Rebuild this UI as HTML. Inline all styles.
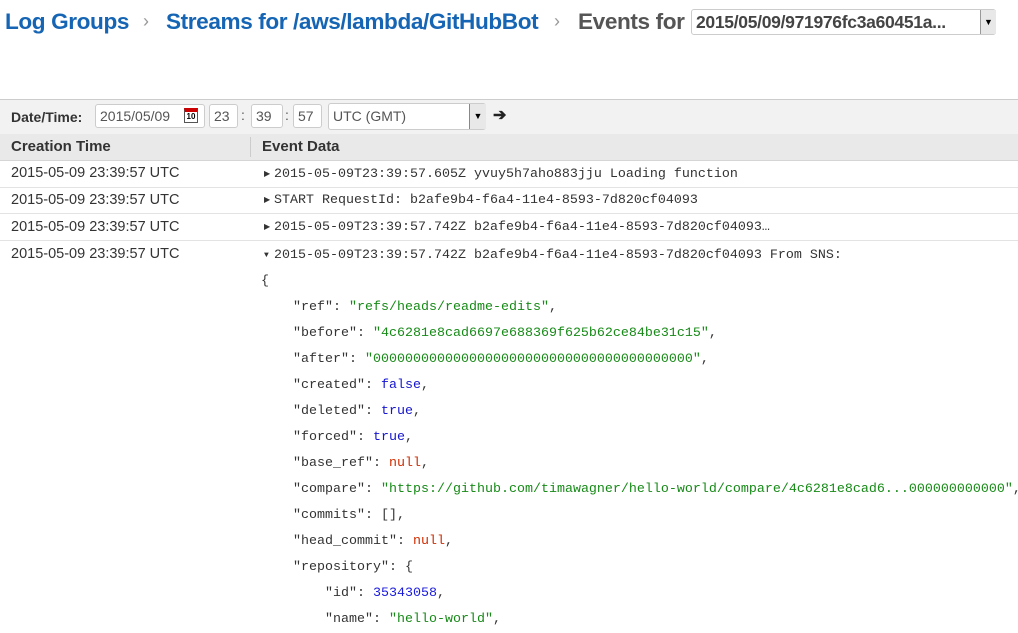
<!DOCTYPE html>
<html><head><style>
body{margin:0;width:1018px;height:628px;overflow:hidden;background:#fff;font-family:"Liberation Sans",Arial,sans-serif;position:relative}
.a{position:absolute;white-space:pre}
.h{font-size:22.6px;font-weight:bold;top:9px;letter-spacing:-0.4px}
.bl{color:#1565b4}
.g{color:#555}
.sep{color:#999;font-size:18px;top:11px;font-weight:normal}
.box{position:absolute;border:1px solid #ccc;border-radius:3px;background:#fff;font-size:14px;color:#555;box-sizing:border-box;padding-left:4px;line-height:22px}
.m{font-family:"Liberation Mono","Courier New",monospace;font-size:13.33px;color:#333}
.t{display:inline-block;width:10px;font-size:8px;vertical-align:1px}
.row{position:absolute;left:0;width:1018px;border-bottom:1px solid #e3e3e3}
.ct{position:absolute;left:11px;font-size:14.5px;color:#333}
.s{color:#178a17}.b{color:#1515d0}.n{color:#d02c00}.num{color:#1a1adb}
</style></head><body>
<div class="a h bl" style="left:5px">Log Groups</div>
<div class="a sep" style="left:143px">›</div>
<div class="a h bl" style="left:166px">Streams for /aws/lambda/GitHubBot</div>
<div class="a sep" style="left:554px">›</div>
<div class="a h g" style="left:578px">Events for</div>
<div class="box" style="left:691px;top:9px;width:305px;height:26px;font-size:17.5px;font-weight:bold;color:#444;line-height:24px;letter-spacing:-0.3px">2015/05/09/971976fc3a60451a...</div>
<div style="position:absolute;left:980px;top:10px;width:15px;height:24px;background:#e8e8e8;border-left:1px solid #999;font-size:9px;text-align:center;line-height:24px">▼</div>

<div style="position:absolute;left:0;top:99px;width:1018px;height:34px;background:#f2f2f2;border-top:1px solid #ccc;border-bottom:1px solid #ddd"></div>
<div class="a" style="left:11px;top:109px;font-size:14px;font-weight:bold;color:#333">Date/Time:</div>
<div class="box" style="left:95px;top:104px;width:110px;height:24px">2015/05/09</div>
<div style="position:absolute;left:184px;top:108px;width:14px;height:15px;background:#fff;border:1px solid #555;box-sizing:border-box;border-top:4px solid #c00;font-size:8px;font-weight:bold;text-align:center;line-height:10px">10</div>
<div class="box" style="left:209px;top:104px;width:29px;height:24px">23</div>
<div class="a" style="left:241px;top:107px;font-size:14px;color:#555">:</div>
<div class="box" style="left:251px;top:104px;width:32px;height:24px">39</div>
<div class="a" style="left:285px;top:107px;font-size:14px;color:#555">:</div>
<div class="box" style="left:293px;top:104px;width:29px;height:24px">57</div>
<div class="box" style="left:328px;top:103px;width:158px;height:27px;line-height:25px;font-size:14px">UTC (GMT)</div>
<div style="position:absolute;left:469px;top:104px;width:16px;height:25px;background:#e8e8e8;border-left:1px solid #888;font-size:9px;text-align:center;line-height:25px">▼</div>
<div class="a" style="left:493px;top:105px;font-size:16px;font-weight:bold;color:#222">➔</div>

<div style="position:absolute;left:0;top:134px;width:1018px;height:26px;background:#e9e9e9;border-bottom:1px solid #d5d5d5"></div>
<div style="position:absolute;left:250px;top:137px;width:1px;height:20px;background:#ccc"></div>
<div class="a" style="left:11px;top:138px;font-size:15px;font-weight:bold;color:#333">Creation Time</div>
<div class="a" style="left:262px;top:138px;font-size:15px;font-weight:bold;color:#333">Event Data</div>

<div class="row" style="top:161px;height:26px"></div>
<div class="row" style="top:187px;height:26px"></div>
<div class="row" style="top:213px;height:27px"></div>
<div class="ct" style="top:165px">2015-05-09 23:39:57 UTC</div>
<div class="ct" style="top:192px">2015-05-09 23:39:57 UTC</div>
<div class="ct" style="top:219px">2015-05-09 23:39:57 UTC</div>
<div class="ct" style="top:246px">2015-05-09 23:39:57 UTC</div>
<div class="a m" style="left:264px;top:167px"><span class="t">▶</span>2015-05-09T23:39:57.605Z yvuy5h7aho883jju Loading function</div>
<div class="a m" style="left:264px;top:193px"><span class="t">▶</span>START RequestId: b2afe9b4-f6a4-11e4-8593-7d820cf04093</div>
<div class="a m" style="left:264px;top:220px"><span class="t">▶</span>2015-05-09T23:39:57.742Z b2afe9b4-f6a4-11e4-8593-7d820cf04093…</div>
<div class="a m" style="left:261px;top:243px;line-height:26px"><span class="t" style="margin-left:3px">▼</span>2015-05-09T23:39:57.742Z b2afe9b4-f6a4-11e4-8593-7d820cf04093 From SNS:
{
    "ref": <span class="s">"refs/heads/readme-edits"</span>,
    "before": <span class="s">"4c6281e8cad6697e688369f625b62ce84be31c15"</span>,
    "after": <span class="s">"0000000000000000000000000000000000000000"</span>,
    "created": <span class="b">false</span>,
    "deleted": <span class="b">true</span>,
    "forced": <span class="b">true</span>,
    "base_ref": <span class="n">null</span>,
    "compare": <span class="s">"https://github.com/timawagner/hello-world/compare/4c6281e8cad6...000000000000"</span>,
    "commits": [],
    "head_commit": <span class="n">null</span>,
    "repository": {
        "id": <span class="num">35343058</span>,
        "name": <span class="s">"hello-world"</span>,</div>
</body></html>
